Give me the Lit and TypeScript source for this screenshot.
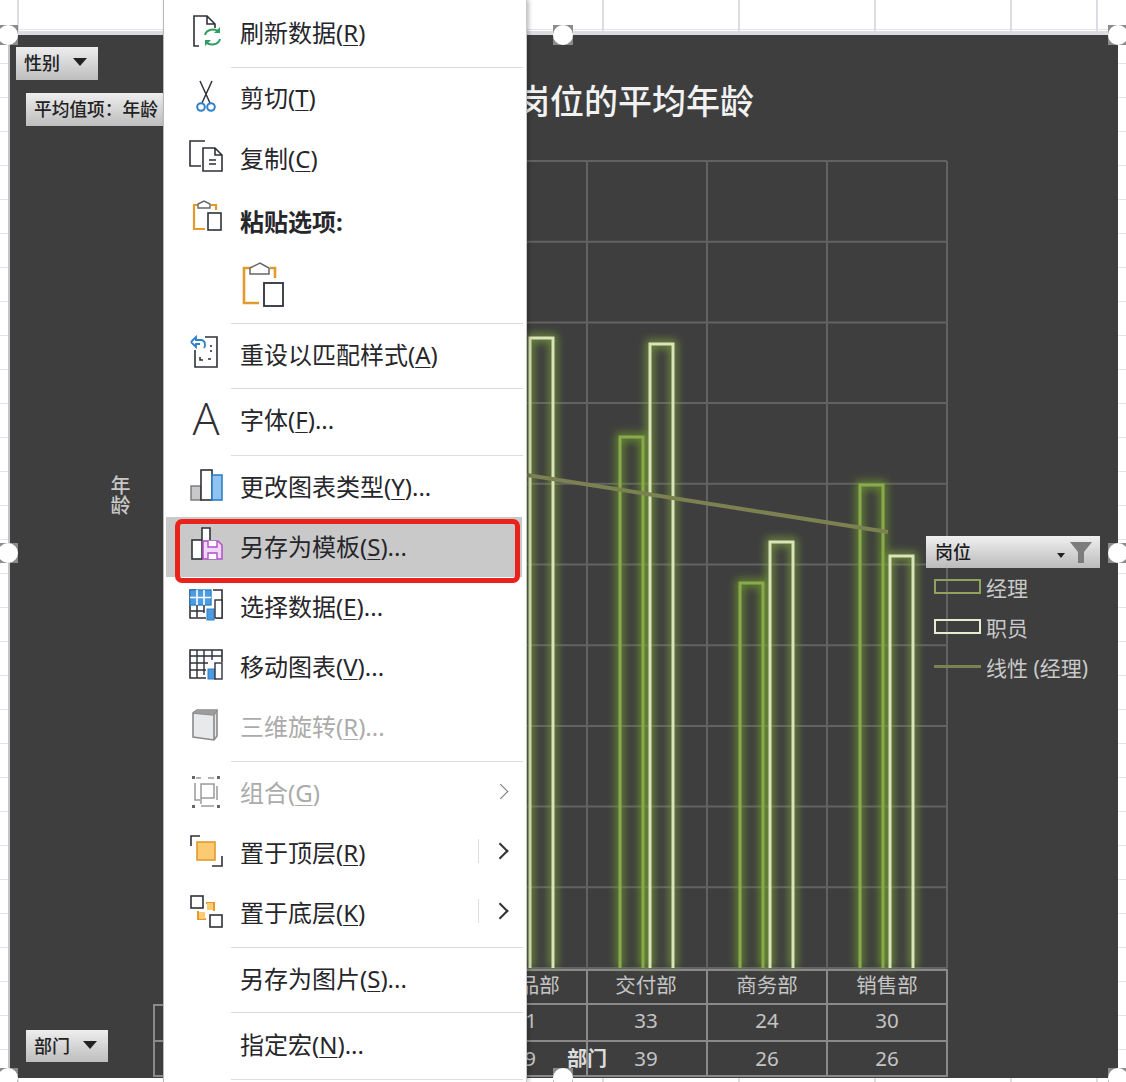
import { LitElement, html, svg, css } from "lit";
import { customElement } from "lit/decorators.js";

const DARK = "#2e3137";
const ORANGE = "#e39a2d";
const BLUE = "#2f80c8";

// every icon sits in a 40x40 box
const icons: Record<string, unknown> = {
  refresh: svg`
    <path d="M13 34H8V4H21L29 12V16M21 4V12H29" fill="none" stroke="${DARK}" stroke-width="1.6"/>
    <path d="M19 23a8 7 0 0 1 14-3M34 27a8 7 0 0 1-14 3" fill="none" stroke="#2f9e5f" stroke-width="2"/>
    <path d="M34 15v6h-6zM19 34v-6h6z" fill="#2f9e5f"/>`,
  cut: svg`
    <path d="M14 4L24 26M26 4L16 26" fill="none" stroke="${DARK}" stroke-width="1.5"/>
    <circle cx="15" cy="30" r="3.8" fill="none" stroke="${BLUE}" stroke-width="2"/>
    <circle cx="25" cy="30" r="3.8" fill="none" stroke="${BLUE}" stroke-width="2"/>`,
  copy: svg`
    <path d="M15 29H4V4H19" fill="none" stroke="${DARK}" stroke-width="1.6"/>
    <path d="M17 34V11H29L36 18V34ZM29 11V18H36" fill="#fff" stroke="${DARK}" stroke-width="1.6"/>
    <path d="M23 23h7M23 27h7" stroke="${DARK}" stroke-width="1.4"/>`,
  paste: svg`
    <path d="M12 5H8V29H19M25 5H30V10" fill="none" stroke="${ORANGE}" stroke-width="2.2"/>
    <path d="M12 8V4L18 1L24 4V8Z" fill="#fff" stroke="#666" stroke-width="1.4"/>
    <rect x="22" y="13" width="13" height="17" fill="#fff" stroke="${DARK}" stroke-width="1.6"/>`,
  pasteBig: svg`
    <path d="M10 6H2V41H17M28 6H33V16" fill="none" stroke="${ORANGE}" stroke-width="2.6"/>
    <path d="M8 12V6L18 1L27 6V12Z" fill="#fff" stroke="#666" stroke-width="1.5"/>
    <rect x="22" y="21" width="19" height="23" fill="#fff" stroke="${DARK}" stroke-width="1.8"/>`,
  reset: svg`
    <path d="M19 4H31V34H9V17" fill="none" stroke="${DARK}" stroke-width="1.6"/>
    <path d="M5 9L10 4V7H15C19 7 20 12 18 15M5 9L10 14V11H14" fill="none" stroke="${BLUE}" stroke-width="1.8"/>
    <path d="M25 12v2M25 17v2M14 24v3h3M22 26h3" stroke="${DARK}" stroke-width="1.6" fill="none"/>`,
  chartType: svg`
    <rect x="5" y="20" width="10" height="14" fill="#c8c8c8" stroke="#777" stroke-width="1.4"/>
    <rect x="15" y="4" width="11" height="30" fill="#fff" stroke="${DARK}" stroke-width="1.6"/>
    <rect x="26" y="9" width="10" height="25" fill="#8fc3f0" stroke="${BLUE}" stroke-width="1.6"/>`,
  template: svg`
    <rect x="6" y="15" width="10" height="19" fill="#fff" stroke="${DARK}" stroke-width="1.6"/>
    <path d="M16 15V3H24V15" fill="#fff" stroke="${DARK}" stroke-width="1.6"/>
    <path d="M17 16H32L36 20V34H17Z" fill="#efd9f5" stroke="#b14fc9" stroke-width="1.5"/>
    <path d="M22 16V22H31V16M22 34V28H31V34" fill="#fff" stroke="#b14fc9" stroke-width="1.4"/>`,
  selectData: svg`
    <path d="M27 5H36V33H30M20 33H4V5H10" fill="#fff" stroke="${DARK}" stroke-width="1.6"/>
    <rect x="4" y="5" width="21" height="15" fill="#4d9be0" stroke="${BLUE}" stroke-width="1.4"/>
    <path d="M4 12.5H25M11 5V33M18 5V28M4 26H18" stroke-width="1.6" stroke="#fff"/>
    <path d="M4 26H18M11 20V33M18 20V28" stroke-width="1.5" stroke="${DARK}" fill="none"/>
    <rect x="21" y="24" width="7" height="11" fill="#4d9be0" stroke="${BLUE}"/>
    <rect x="29" y="15" width="7" height="18" fill="#fff" stroke="${DARK}" stroke-width="1.4"/>`,
  moveChart: svg`
    <path d="M36 17V5H4V33H20" fill="none" stroke="${DARK}" stroke-width="1.6"/>
    <path d="M4 11H36M4 18H22M4 25H20M11 5V33M18 5V30M26 5V15" fill="none" stroke="${DARK}" stroke-width="1.4"/>
    <rect x="22" y="24" width="7" height="10" fill="#4d9be0" stroke="${BLUE}"/>
    <rect x="29" y="18" width="7" height="16" fill="#fff" stroke="${DARK}" stroke-width="1.4"/>`,
  rotate: svg`
    <path d="M7 8L11 5H31V31L28 35L7 32Z" fill="#e8e9ea" stroke="#8a8a8a" stroke-width="1.6"/>
    <path d="M7 8L28 10V35M28 10L31 5" fill="none" stroke="#8a8a8a" stroke-width="1.6"/>
    <path d="M7 8L11 5H31L28 10Z" fill="#9c9c9c"/>`,
  group: svg`
    <path d="M9 11V28H14M15 34H28M31 14V28M15 12H28V26H15ZM15 26V32M10 6H15M22 6H28" fill="none" stroke="#9a9a9a" stroke-width="1.5"/>
    <path d="M6 4h3v3H6zM31 4h3v3h-3zM6 33h3v3H6zM31 33h3v3h-3z" fill="#666"/>`,
  front: svg`
    <path d="M14 5H5V15M36 25V35H26" fill="none" stroke="${DARK}" stroke-width="1.6"/>
    <rect x="11" y="11" width="18" height="18" fill="#fbcb74" stroke="${ORANGE}" stroke-width="1.6"/>`,
  back: svg`
    <rect x="5" y="5" width="12" height="12" fill="#fff" stroke="${DARK}" stroke-width="1.6"/>
    <path d="M20 12H28V20M12 20V28H20" fill="none" stroke="${ORANGE}" stroke-width="2"/>
    <path d="M13 21H19V28H13ZM21 12H27V19H21Z" fill="#fbcb74"/>
    <rect x="24" y="24" width="12" height="12" fill="#fff" stroke="${DARK}" stroke-width="1.6"/>`,
};

interface Item {
  h: number;
  up?: number; // nudge the content above the row's centre
  label?: string;
  key?: string;
  dots?: boolean;
  icon?: string;
  off?: boolean;
  bold?: boolean;
  arrow?: "plain" | "split";
  sep?: boolean;
  hot?: boolean;
  big?: boolean;
}

const items: Item[] = [
  { h: 67, up: 2, label: "刷新数据", key: "R", icon: "refresh", sep: true },
  { h: 61, up: 2, label: "剪切", key: "T", icon: "cut" },
  { h: 60, up: 2, label: "复制", key: "C", icon: "copy" },
  { h: 64, up: 1, label: "粘贴选项:", icon: "paste", bold: true },
  { h: 70, big: true, sep: true },
  { h: 64, up: 3, label: "重设以匹配样式", key: "A", icon: "reset", sep: true },
  { h: 66, up: 4, label: "字体", key: "F", dots: true, icon: "font", sep: true },
  { h: 61, up: 1, label: "更改图表类型", key: "Y", dots: true, icon: "chartType" },
  { h: 60, up: 2, label: "另存为模板", key: "S", dots: true, icon: "template", hot: true },
  { h: 60, up: 2, label: "选择数据", key: "E", dots: true, icon: "selectData" },
  { h: 60, up: 2, label: "移动图表", key: "V", dots: true, icon: "moveChart" },
  { h: 64, up: 4, label: "三维旋转", key: "R", dots: true, icon: "rotate", off: true, sep: true },
  { h: 61, up: 1, label: "组合", key: "G", icon: "group", off: true, arrow: "plain" },
  { h: 60, up: 2, label: "置于顶层", key: "R", icon: "front", arrow: "split" },
  { h: 64, up: 4, label: "置于底层", key: "K", icon: "back", arrow: "split", sep: true },
  { h: 64, up: 3, label: "另存为图片", key: "S", dots: true, sep: true },
  { h: 66, up: 3, label: "指定宏", key: "N", dots: true, sep: true },
];

const gridX = [587, 707, 827, 947];
const gridY = Array.from({ length: 11 }, (_, i) => 161 + i * 80.7);
const BASE = 968;
const bars = [
  { x: 530, top: 338, staff: true },
  { x: 620, top: 437, staff: false },
  { x: 650, top: 344, staff: true },
  { x: 740, top: 583, staff: false },
  { x: 770, top: 542, staff: true },
  { x: 860, top: 485, staff: false },
  { x: 890, top: 556, staff: true },
];
const tableText = [
  { x: 529, y: 993, t: "产品部" },
  { x: 646, y: 993, t: "交付部" },
  { x: 767, y: 993, t: "商务部" },
  { x: 887, y: 993, t: "销售部" },
  { x: 531, y: 1028, t: "1" },
  { x: 646, y: 1028, t: "33" },
  { x: 767, y: 1028, t: "24" },
  { x: 887, y: 1028, t: "30" },
  { x: 530, y: 1066, t: "9" },
  { x: 646, y: 1066, t: "39" },
  { x: 767, y: 1066, t: "26" },
  { x: 887, y: 1066, t: "26" },
];
const handles = [
  [8, 35], [563, 35], [1118, 35],
  [8, 553], [1118, 553],
  [8, 1078], [563, 1078], [1118, 1078],
];

@customElement("app-root")
export class AppRoot extends LitElement {
  static styles = css`
    :host {
      display: block;
      position: relative;
      width: 1126px;
      height: 1082px;
      overflow: hidden;
      font-family: "Noto Sans", "Noto Sans CJK SC", sans-serif;
      background-color: #fff;
      background-image:
        linear-gradient(#dcdce2, #dcdce2),
        linear-gradient(#dcdce2, #dcdce2),
        repeating-linear-gradient(90deg, transparent 0 602px, #dcdce2 602px 604px, transparent 604px 738px),
        repeating-linear-gradient(90deg, transparent 0 738px, #dcdce2 738px 740px, transparent 740px 874px),
        repeating-linear-gradient(90deg, transparent 0 874px, #dcdce2 874px 876px, transparent 876px 1126px),
        repeating-linear-gradient(90deg, transparent 0 1010px, #dcdce2 1010px 1012px, transparent 1012px 1126px),
        repeating-linear-gradient(180deg, transparent 0 29px, #e4e4e8 29px 30px, transparent 30px 34px);
      background-size: 2px 100%, 2px 100%, 100% 100%, 100% 100%, 100% 100%, 100% 100%, 100% 100%;
      background-position: 17px 0, 1096px 0, 0 0, 0 0, 0 0, 0 0, 0 0;
      background-repeat: no-repeat;
    }

    .sheet {
      padding: 31px 8px 0 8px;
    }
    .chart {
      position: relative;
      box-sizing: border-box;
      height: 1047px;
      border-top: 4px solid #dcdce2;
      border-left: 2px solid #c4c4c8;
      background: #3e3e3e;
      display: flex;
      justify-content: space-between;
      padding: 12px 18px 16px 6px;
    }
    .plot {
      position: absolute;
      left: 0;
      top: 0;
    }

    .filters {
      position: relative;
      display: flex;
      flex-direction: column;
      width: 150px;
    }
    .pill {
      display: flex;
      align-items: center;
      justify-content: space-between;
      box-sizing: border-box;
      height: 33px;
      padding: 0 11px 3px 8px;
      font-size: 18px;
      font-weight: 500;
      color: #222;
      background: linear-gradient(#eeeeee, #bdbdbd);
      white-space: nowrap;
    }
    .pill.field {
      width: 82px;
    }
    .pill.value {
      margin: 13px -4px 0 10px;
      padding-left: 8px;
      justify-content: flex-start;
      font-size: 17.7px;
    }
    .pill.bottom {
      margin: auto 0 0 10px;
      height: 32px;
    }
    .caret {
      width: 0;
      height: 0;
      border: 7px solid transparent;
      border-top: 8px solid #222;
      border-bottom: 0;
    }
    .axis-title {
      align-self: flex-start;
      margin: 349px 0 0 93px;
      writing-mode: vertical-rl;
      font-size: 20px;
      line-height: 20px;
      color: #c8c8c8;
      font-weight: 500;
    }

    .legend {
      position: relative;
      align-self: flex-start;
      margin-top: 489px;
      width: 174px;
      display: flex;
      flex-direction: column;
    }
    .legend-head {
      display: flex;
      align-items: center;
      gap: 3px;
      height: 32px;
      padding: 0 6px 0 9px;
      font-size: 18px;
      font-weight: 500;
      color: #1c1c1c;
      background: linear-gradient(#f0f0f0, #bbb);
    }
    .legend-head span {
      margin: 0 auto 3px 0;
    }
    .legend-head .caret {
      border-width: 5px 4px 0;
      margin-top: 6px;
    }
    .legend-row {
      display: flex;
      align-items: center;
      gap: 5px;
      height: 40px;
      padding: 0 0 3px 8px;
      box-sizing: border-box;
      font-size: 21px;
      color: #c9c9c9;
    }
    .swatch {
      box-sizing: border-box;
      width: 47px;
      height: 15px;
      border: 2.5px solid #8fa35c;
    }
    .swatch.staff {
      border-color: #e6ecd0;
    }
    .swatch.line {
      height: 3px;
      border: 0;
      background: #7c8152;
    }

    .menu {
      position: absolute;
      left: 163px;
      top: 0;
      width: 364px;
      height: 1082px;
      box-sizing: border-box;
      background: #fff;
      border-left: 1px solid #b9b9b9;
      border-right: 1px solid #c8c8c8;
      box-shadow: 2px 0 4px rgba(0, 0, 0, 0.25);
      font-size: 24px;
      color: #26262b;
    }
    .row {
      display: flex;
      box-sizing: border-box;
      align-items: center;
      padding-left: 22px;
      white-space: nowrap;
    }
    .row svg {
      flex: none;
      width: 40px;
      height: 40px;
      margin-right: 14px;
    }
    .row .no-icon {
      width: 54px;
      flex: none;
    }
    .row .glyph {
      flex: none;
      width: 40px;
      margin-right: 14px;
      font-family: "Open Sans", sans-serif;
      font-weight: 300;
      font-size: 45px;
      line-height: 40px;
      text-align: center;
      color: #2e3137;
    }
    .row.off {
      color: #ababab;
    }
    .row.bold {
      font-weight: 700;
    }
    .row.hot {
      background: #c9c9c9;
      margin: 0 4px 0 2px;
      padding-left: 20px;
    }
    .row.big {
      padding: 0 0 7px 78px;
    }
    .row.big svg {
      width: 44px;
      height: 46px;
      margin: 0;
    }
    .row u {
      text-underline-offset: 3px;
      text-decoration-thickness: 1px;
    }
    .sep {
      height: 1px;
      margin: 0 3px 0 67px;
      background: #dcdce4;
    }
    .sub {
      margin-left: auto;
      display: flex;
      align-items: center;
      height: 24px;
    }
    .sub i {
      width: 1px;
      height: 24px;
      margin-right: 18px;
      background: #dedede;
    }
    .sub b {
      width: 10px;
      height: 10px;
      margin-right: 17px;
      border-top: 2px solid #333;
      border-right: 2px solid #333;
      transform: rotate(45deg) translate(-2px, 2px);
    }
    .row.off .sub b {
      border-color: #777;
      border-width: 1.5px;
    }

    .mark {
      position: absolute;
      left: 175px;
      top: 519px;
      width: 345px;
      height: 64px;
      box-sizing: border-box;
      border: 5px solid #e8231c;
      border-radius: 7px;
    }
    .handle {
      position: absolute;
      width: 20px;
      height: 20px;
      margin: -10px 0 0 -10px;
      background: #8b8b8b;
    }
    .handle::after {
      content: "";
      display: block;
      height: 100%;
      border-radius: 50%;
      background: #fff;
    }
  `;

  private renderPlot() {
    return html`<svg class="plot" width="1108" height="1043" viewBox="10 35 1108 1043">
      <defs>
        <filter id="glow" x="-80%" y="-5%" width="260%" height="110%">
          <feGaussianBlur stdDeviation="4" />
        </filter>
      </defs>
      <text x="516" y="114" font-family="Noto Sans CJK SC" font-weight="500" font-size="34" fill="#f2f2f2">岗位的平均年龄</text>
      ${gridY.map((y) => svg`<line x1="527" x2="947" y1=${y} y2=${y} stroke="#626262" stroke-width="2" />`)}
      ${gridX.map((x) => svg`<line x1=${x} x2=${x} y1="161" y2=${BASE} stroke="#626262" stroke-width="2" />`)}
      ${bars.map((b) => {
        const d = `M${b.x} ${BASE}V${b.top}H${b.x + 23}V${BASE}`;
        return svg`
          <path d=${d} fill="none" stroke=${b.staff ? "#7fa43d" : "#72a02a"} stroke-width="8" opacity="0.75" filter="url(#glow)" />
          <path d=${d} fill="none" stroke=${b.staff ? "#d9e4b8" : "#8aab4d"} stroke-width="3" />`;
      })}
      <line x1="527" y1="475" x2="888" y2="532" stroke="#7c8152" stroke-width="4" />
      <g stroke="#8a8a8a" stroke-width="2" fill="none">
        <path d="M527 970H947V1076H527M527 1004H947M527 1041H947" />
        ${gridX.map((x) => svg`<line x1=${x} x2=${x} y1="970" y2="1076" />`)}
        <path d="M163 1005H154V1076H163M154 1041H163" />
      </g>
      <g font-family="Noto Sans, Noto Sans CJK SC" font-size="20.5" fill="#c4c4c4" text-anchor="middle">
        ${tableText.map((c) => svg`<text x=${c.x} y=${c.y}>${c.t}</text>`)}
      </g>
      <text x="567" y="1066" font-family="Noto Sans CJK SC" font-size="20" font-weight="700" fill="#dcdcdc">部门</text>
    </svg>`;
  }

  private renderIcon(it: Item) {
    if (!it.icon) return html`<span class="no-icon"></span>`;
    if (it.icon === "font") return html`<span class="glyph">A</span>`;
    return html`<svg viewBox="0 0 40 40">${icons[it.icon]}</svg>`;
  }

  private renderRow(it: Item) {
    if (it.big) {
      return html`<div class="row big" style="height:${it.h}px">
        <svg viewBox="0 0 44 46">${icons.pasteBig}</svg>
      </div>`;
    }
    const cls = ["row", it.off ? "off" : "", it.bold ? "bold" : "", it.hot ? "hot" : ""].join(" ");
    return html`<div class=${cls} style="height:${it.h}px;padding-bottom:${(it.up ?? 0) * 2}px">
      ${this.renderIcon(it)}
      <span>${it.label}${it.key ? html`(<u>${it.key}</u>)` : ""}${it.dots ? "..." : ""}</span>
      ${it.arrow
        ? html`<span class="sub">${it.arrow === "split" ? html`<i></i>` : ""}<b></b></span>`
        : ""}
    </div>`;
  }

  render() {
    return html`
      <div class="sheet">
        <div class="chart">
          ${this.renderPlot()}
          <div class="filters">
            <div class="pill field">性别<span class="caret"></span></div>
            <div class="pill value">平均值项：年龄</div>
            <div class="axis-title">年龄</div>
            <div class="pill field bottom">部门<span class="caret"></span></div>
          </div>
          <div class="legend">
            <div class="legend-head">
              <span>岗位</span>
              <i class="caret"></i>
              <svg width="26" height="24" viewBox="0 0 26 24"><path d="M2 2H24L16 12V23H10V12Z" fill="#7c7c7c" /></svg>
            </div>
            <div class="legend-row"><i class="swatch"></i>经理</div>
            <div class="legend-row"><i class="swatch staff"></i>职员</div>
            <div class="legend-row"><i class="swatch line"></i>线性 (经理)</div>
          </div>
        </div>
      </div>
      ${handles.map(
        ([x, y]) => html`<div class="handle" style="left:${x}px;top:${y}px"></div>`
      )}
      <div class="menu">
        ${items.map(
          (it) => html`${this.renderRow(it)}${it.sep ? html`<div class="sep"></div>` : ""}`
        )}
      </div>
      <div class="mark"></div>
    `;
  }
}
